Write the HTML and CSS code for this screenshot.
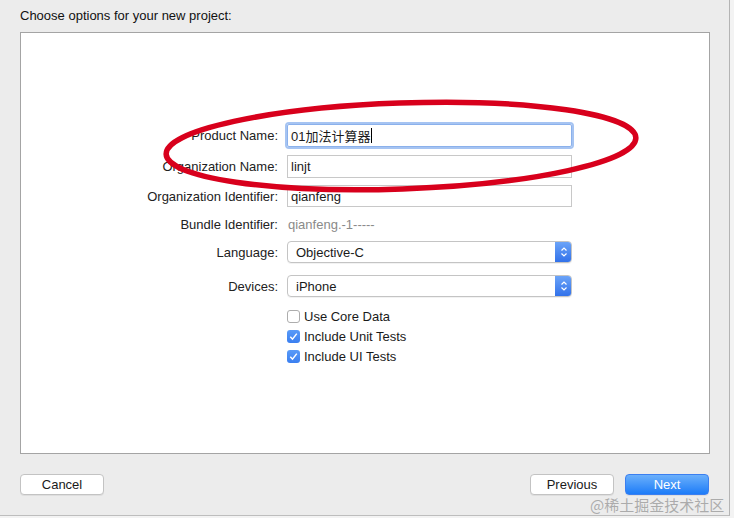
FILE: index.html
```html
<!DOCTYPE html>
<html lang="en">
<head>
  <meta charset="UTF-8">
  <meta name="viewport" content="width=device-width, initial-scale=1.0">
  <title>New Project</title>
  <link rel="stylesheet" href="styles.css">
</head>
<body>
  <div class="window">
    <h1 class="title">Choose options for your new project:</h1>

    <div class="panel">
      <div class="form">
        <div class="row row-product">
          <label class="label">Product Name:</label>
          <div class="field focused"><span>01加法计算器</span><i class="caret"></i></div>
        </div>
        <div class="row row-org">
          <label class="label">Organization Name:</label>
          <div class="field"><span>linjt</span></div>
        </div>
        <div class="row row-orgid">
          <label class="label">Organization Identifier:</label>
          <div class="field"><span>qianfeng</span></div>
        </div>
        <div class="row row-bundle">
          <label class="label">Bundle Identifier:</label>
          <div class="plain">qianfeng.-1-----</div>
        </div>
        <div class="row row-lang">
          <label class="label">Language:</label>
          <div class="popup">
            <span>Objective-C</span>
            <span class="stepper">
              <svg width="8" height="12" viewBox="0 0 8 12"><path d="M1.5 4.5 L4 2 L6.5 4.5 M1.5 7.5 L4 10 L6.5 7.5" fill="none" stroke="#fff" stroke-width="1.2"/></svg>
            </span>
          </div>
        </div>
        <div class="row row-dev">
          <label class="label">Devices:</label>
          <div class="popup">
            <span>iPhone</span>
            <span class="stepper">
              <svg width="8" height="12" viewBox="0 0 8 12"><path d="M1.5 4.5 L4 2 L6.5 4.5 M1.5 7.5 L4 10 L6.5 7.5" fill="none" stroke="#fff" stroke-width="1.2"/></svg>
            </span>
          </div>
        </div>
        <div class="checks">
          <div class="check"><span class="box"></span>Use Core Data</div>
          <div class="check"><span class="box on"><svg width="13" height="13" viewBox="0 0 13 13"><path d="M3.3 6.8 L5.5 9.2 L9.8 3.6" fill="none" stroke="#fff" stroke-width="1.5"/></svg></span>Include Unit Tests</div>
          <div class="check"><span class="box on"><svg width="13" height="13" viewBox="0 0 13 13"><path d="M3.3 6.8 L5.5 9.2 L9.8 3.6" fill="none" stroke="#fff" stroke-width="1.5"/></svg></span>Include UI Tests</div>
        </div>
      </div>
    </div>

    <div class="footer">
      <button class="btn">Cancel</button>
      <div class="right">
        <button class="btn">Previous</button>
        <button class="btn primary">Next</button>
      </div>
    </div>
  </div>

  <svg class="circle" width="734" height="518" viewBox="0 0 734 518">
    <ellipse cx="401" cy="146" rx="235" ry="43" transform="rotate(-2 401 146)" fill="none" stroke="#d8001c" stroke-width="5.5"/>
  </svg>

  <div class="watermark">@稀土掘金技术社区</div>
</body>
</html>
```

FILE: styles.css
```css
* {
  margin: 0;
  padding: 0;
  box-sizing: border-box;
}
body {
  width: 734px;
  height: 518px;
  background: #f3f3f3;
  font-family: 'Liberation Sans', Arial, 'Noto Sans CJK SC', sans-serif;
  font-size: 13px;
  color: #1a1a1a;
  position: relative;
  overflow: hidden;
}
.window {
  width: 730px;
  height: 516px;
  background: #ececec;
  border-right: 1px solid #b4b4b4;
  border-bottom: 1px solid #bdbdbd;
  padding: 0 20px 0 20px;
}
.title {
  font-size: 13px;
  font-weight: normal;
  padding-top: 8px;
  height: 32px;
  color: #111;
}
.panel {
  width: 690px;
  height: 422px;
  background: #fff;
  border: 1px solid #a4a4a4;
  padding-top: 91px;
}
.form {
  display: flex;
  flex-direction: column;
}
.row {
  display: flex;
  align-items: center;
  gap: 9px;
}
.label {
  width: 257px;
  text-align: right;
  color: #222;
}
.field {
  width: 285px;
  height: 23px;
  border: 1px solid #c8c8c8;
  display: flex;
  align-items: center;
  padding-left: 3px;
}
.field.focused {
  border: 1px solid #8bb1ec;
  box-shadow: 0 0 0 2px #a6c4f2;
  border-radius: 2px;
}
.caret {
  display: inline-block;
  width: 1px;
  height: 15px;
  background: #000;
  margin-left: 1px;
}
.row-org { margin-top: 8px; }
.row-orgid { margin-top: 7px; }
.row-orgid .field { height: 22px; }
.row-bundle { margin-top: 7px; height: 20px; }
.plain { color: #8a8a8a; padding-left: 1px; }
.row-lang { margin-top: 7px; }
.row-dev { margin-top: 12px; }
.popup {
  width: 285px;
  height: 22px;
  border: 1px solid #c4c4c4;
  border-radius: 4px;
  display: flex;
  align-items: center;
  justify-content: space-between;
  padding-left: 8px;
  overflow: hidden;
  box-shadow: 0 1px 0 rgba(0,0,0,0.05);
}
.stepper {
  width: 17px;
  height: 22px;
  margin-right: -1px;
  background: linear-gradient(#6ea6f9, #2f6fe9);
  display: flex;
  align-items: center;
  justify-content: center;
  border-radius: 0 4px 4px 0;
}
.checks {
  margin-left: 266px;
  margin-top: 12px;
  display: flex;
  flex-direction: column;
  gap: 6px;
}
.check {
  display: flex;
  align-items: center;
  gap: 4px;
  height: 14px;
}
.box {
  width: 13px;
  height: 13px;
  border: 1px solid #adadad;
  border-radius: 3px;
  background: #fff;
  display: flex;
}
.box.on {
  border: none;
  background: linear-gradient(#5a9bf8, #3a7ff0);
}
.footer {
  display: flex;
  justify-content: space-between;
  margin-top: 20px;
}
.right {
  display: flex;
  gap: 11px;
}
.btn {
  width: 84px;
  height: 21px;
  border: 1px solid #c3c3c3;
  border-radius: 4px;
  background: #fff;
  font-family: 'Liberation Sans', Arial, sans-serif;
  font-size: 13px;
  color: #1a1a1a;
  box-shadow: 0 1px 0 rgba(0,0,0,0.06);
}
.btn.primary {
  border-color: #3b7ff0;
  background: linear-gradient(#6bb0fb, #1d7cf8);
  color: #fff;
}
.circle {
  position: absolute;
  left: 0;
  top: 0;
  pointer-events: none;
}
.watermark {
  position: absolute;
  left: 590px;
  top: 495px;
  font-family: 'Noto Sans CJK SC', sans-serif;
  font-size: 15px;
  line-height: 20px;
  white-space: nowrap;
  color: rgba(160,160,160,0.85);
}
```
